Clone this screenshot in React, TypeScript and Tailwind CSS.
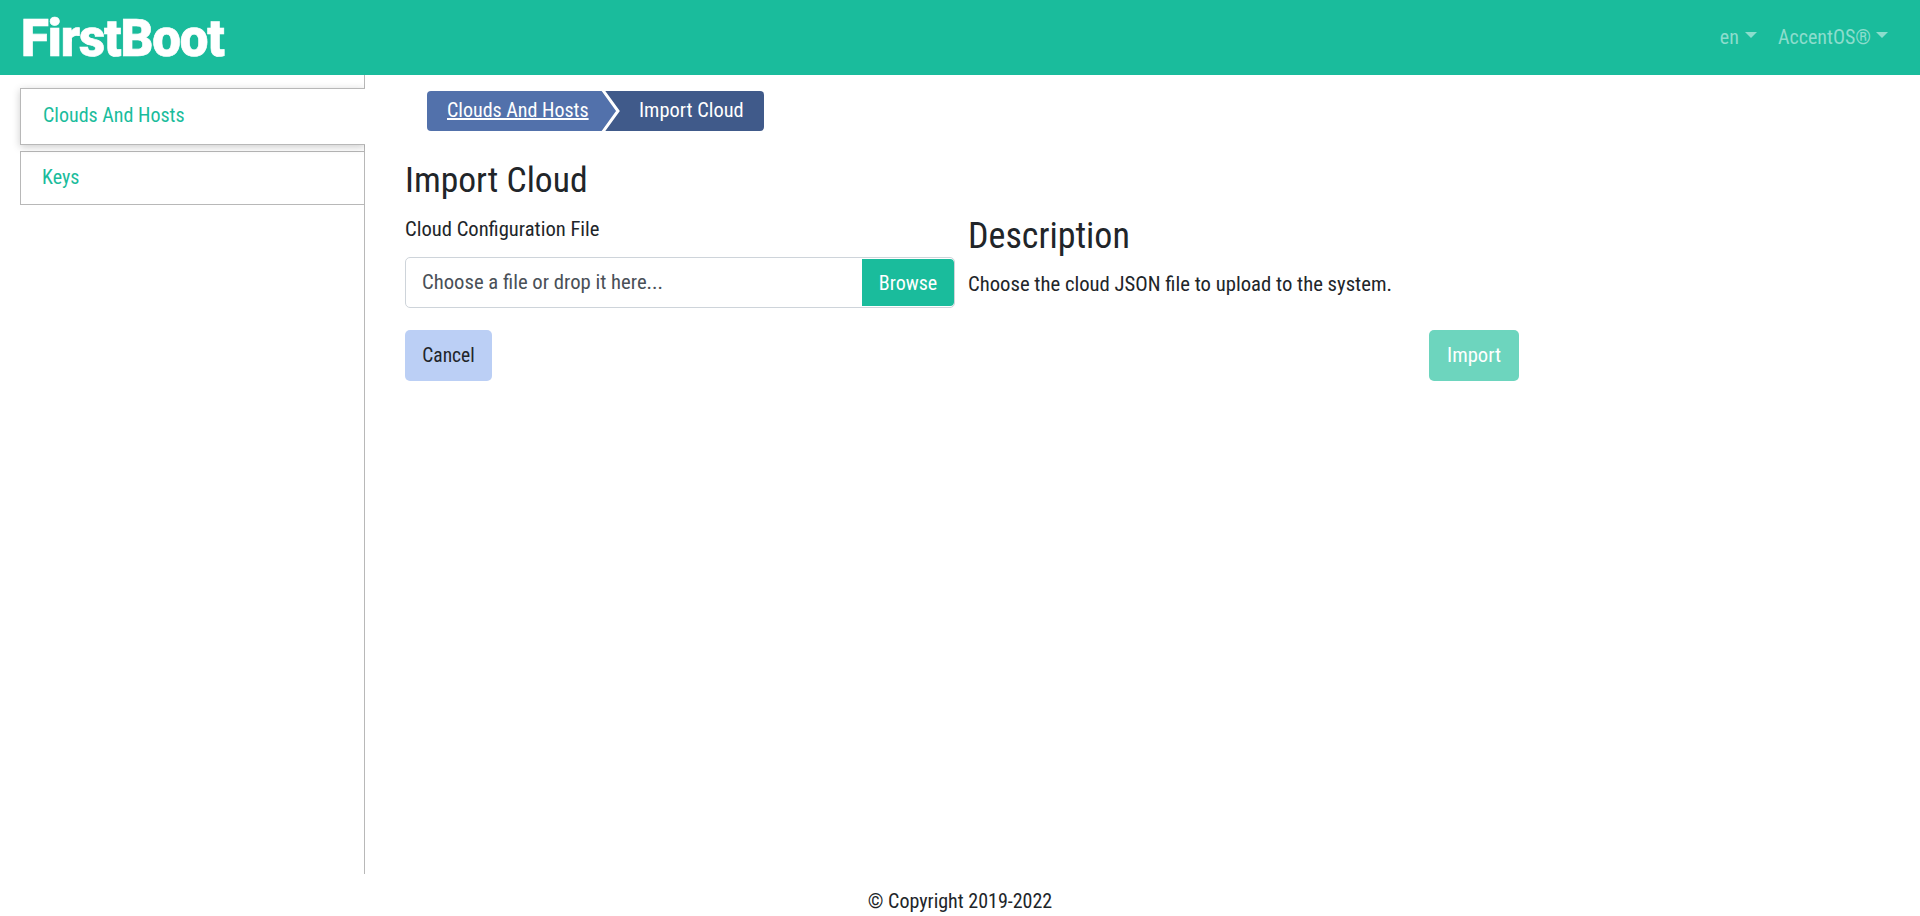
export default function App() {
  const font = "font-['Liberation_Sans_Narrow','Roboto_Condensed','Liberation_Sans',sans-serif]";
  return (
    <div className={`w-[1920px] h-[916px] overflow-hidden flex flex-col bg-white text-[#212529] ${font}`}>
      <header className="h-[75px] shrink-0 bg-[#1abc9c] flex items-center justify-between pl-[21px] pr-[32px]">
        <div className="font-['Roboto',sans-serif] font-black text-[51px] leading-none text-white tracking-[-1.1px] [-webkit-text-stroke:0.6px_white] mt-[1px]">FirstBoot</div>
        <nav className="flex items-center gap-[21px] text-[20px] text-[#8cddcd] -mt-[1px]">
          <div className="flex items-center gap-[6px]">
            <span>en</span>
            <span className="w-0 h-0 border-x-[6.5px] border-x-transparent border-t-[6.5px] border-t-[#8cddcd] -mt-[4px]" />
          </div>
          <div className="flex items-center gap-[5px]">
            <span>AccentOS®</span>
            <span className="w-0 h-0 border-x-[6.5px] border-x-transparent border-t-[6.5px] border-t-[#8cddcd] -mt-[4px]" />
          </div>
        </nav>
      </header>
      <div className="flex flex-1 min-h-0">
        <aside className="w-[365px] h-[799px] shrink-0 border-r border-[#b8b8b8] pl-5 pt-[13px] flex flex-col gap-[6px]">
          <a className="h-[57px] -mr-px bg-white border border-r-0 border-[#b8b8b8] shadow-[0_2px_8px_rgba(0,0,0,0.2)] [clip-path:inset(-12px_0_-12px_-12px)] flex items-center pl-[22px] pb-[4px] text-[20px] text-[#1abc9c]">Clouds And Hosts</a>
          <a className="h-[54px] border border-r-0 border-[#b8b8b8] flex items-center pl-[21px] pb-[2px] text-[20px] text-[#1abc9c]">Keys</a>
        </aside>
        <main className="pl-10 flex-1">
          <div className="ml-[22px] mt-4 w-[337px] h-10 flex rounded-[4px] overflow-hidden text-white text-[20px] leading-[38px] relative">
            <a className="w-[175px] bg-[#5271ab] pl-5 underline">Clouds And Hosts</a>
            <span className="flex-1 bg-[#405a8a] pl-[37px] text-[20.4px]">Import Cloud</span>
            <svg className="absolute left-[174px] top-0" width="20" height="40" viewBox="0 0 20 40">
              <polygon points="0,0 16,20 0,40" fill="#5271ab" />
              <polyline points="1,-2 17,20 1,42" fill="none" stroke="#fff" strokeWidth="3" />
            </svg>
          </div>
          <h1 className="mt-[26px] text-[35.6px] leading-[46px] font-normal">Import Cloud</h1>
          <div className="w-[1114px] grid grid-cols-2 gap-x-[14px]">
            <div>
              <label className="block mt-[14px] text-[20.6px] leading-[24px]">Cloud Configuration File</label>
              <div className="mt-[16px] h-[51px] border border-[#ced4da] rounded-[5px] flex items-center justify-between pl-[16px] text-[20.7px] text-[#495057] overflow-hidden">
                <span>Choose a file or drop it here...</span>
                <span className="h-[47px] w-[92px] bg-[#1abc9c] rounded-r-[4px] text-[20px] text-white flex items-center justify-center">Browse</span>
              </div>
            </div>
            <div>
              <h2 className="mt-[11px] -ml-px text-[36px] leading-[44px] font-normal">Description</h2>
              <p className="mt-[14px] -ml-px text-[20.7px] leading-[24px]">Choose the cloud JSON file to upload to the system.</p>
            </div>
          </div>
          <div className="w-[1114px] mt-[22px] flex justify-between">
            <button className="w-[87px] h-[51px] rounded-[5px] bg-[#bbcff5] text-[19.5px] text-[#212529]">Cancel</button>
            <button className="w-[90px] h-[51px] rounded-[5px] bg-[#6dd5be] text-[20.6px] text-white">Import</button>
          </div>
        </main>
      </div>
      <footer className="h-[42px] shrink-0 flex items-center justify-center pt-[12px] text-[20px]">© Copyright 2019-2022</footer>
    </div>
  );
}
